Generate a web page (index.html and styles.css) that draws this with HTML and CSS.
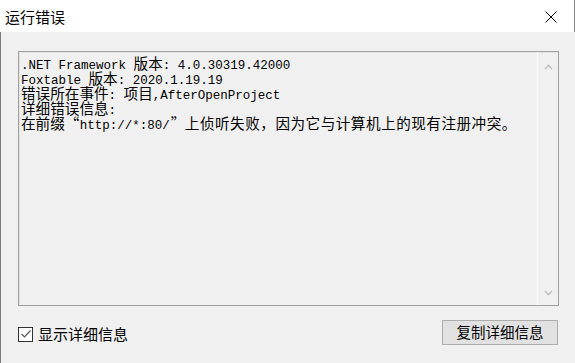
FILE: index.html
```html
<!DOCTYPE html>
<html>
<head>
<meta charset="utf-8">
<link rel="stylesheet" href="styles.css">
</head>
<body>
<div class="window">
  <div class="titlebar">
    <span class="title">运行错误</span>
    <svg class="close" width="12" height="12" viewBox="0 0 12 12"><path d="M0.5 0.5 L11.5 11.5 M11.5 0.5 L0.5 11.5" stroke="#000" stroke-width="1" fill="none"/></svg>
  </div>
  <div class="body">
    <div class="textbox">
      <div class="text">
        <div class="line">.NET Framework <span class="cjk">版本</span>: 4.0.30319.42000</div>
        <div class="line">Foxtable <span class="cjk">版本</span>: 2020.1.19.19</div>
        <div class="line"><span class="cjk">错误所在事件</span>: <span class="cjk">项目</span>,AfterOpenProject</div>
        <div class="line"><span class="cjk">详细错误信息</span>:</div>
        <div class="line"><span class="cjk">在前缀</span><span class="cjk q ql">“</span>http://*:80/<span class="cjk q qr">”</span><span class="cjk wide">上侦听失败，因为它与计算机上的现有注册冲突。</span></div>
      </div>
      <div class="scrollbar">
        <svg width="9" height="6" viewBox="0 0 9 6"><path d="M1 5 L4.5 1.5 L8 5" stroke="#c2c2c2" stroke-width="1.6" fill="none"/></svg>
        <svg width="9" height="6" viewBox="0 0 9 6"><path d="M1 1 L4.5 4.5 L8 1" stroke="#c2c2c2" stroke-width="1.6" fill="none"/></svg>
      </div>
    </div>
    <div class="footer">
      <label class="check">
        <span class="box"><svg width="12" height="12" viewBox="0 0 12 12"><path d="M1.5 6 L4.5 9 L10.5 2.5" stroke="#555" stroke-width="1.2" fill="none"/></svg></span>
        <span class="label">显示详细信息</span>
      </label>
      <button class="btn">复制详细信息</button>
    </div>
  </div>
</div>
</body>
</html>
```
FILE: styles.css
```css
html, body {
  margin: 0;
  padding: 0;
}
body {
  width: 575px;
  height: 363px;
  overflow: hidden;
  background: #f0f0f0;
  font-family: "Noto Sans CJK SC", "Noto Sans", sans-serif;
}
.window {
  display: flex;
  flex-direction: column;
  height: 363px;
}
.titlebar {
  height: 32px;
  flex: none;
  background: #fff;
  display: flex;
  align-items: center;
  justify-content: space-between;
  padding: 0 17px 0 5px;
  border-right: 1px solid #8a8a8a;
  box-sizing: border-box;
}
.title {
  font-size: 15px;
  color: #000;
  line-height: 1;
  margin-top: 1px;
}
.close {
  display: block;
  margin-top: 1px;
}
.body {
  flex: 1;
  display: flex;
  flex-direction: column;
  padding: 19px 16px 0 17px;
  border-left: 1px solid #7a7a7a;
  box-sizing: border-box;
}
.textbox {
  height: 255px;
  box-sizing: border-box;
  border: 1px solid #a0a0a0;
  box-shadow: inset 1px 1px 0 #e3e3e3;
  display: flex;
  background: #f0f0f0;
}
.text {
  flex: 1;
  padding: 3px 0 0 2px;
  font-family: "Liberation Mono", "Noto Sans CJK SC", monospace;
  font-size: 12.5px;
  color: #000;
  white-space: nowrap;
}
.line {
  height: 15px;
  line-height: 15px;
}
.cjk {
  font-family: "Noto Sans CJK SC", sans-serif;
  font-size: 14.6px;
  line-height: 15px;
}
.wide {
  letter-spacing: 0.5px;
}
.q {
  display: inline-block;
  width: 15px;
}
.ql {
  text-align: right;
  padding-right: 1px;
  box-sizing: border-box;
}
.qr {
  text-align: left;
  padding-left: 1px;
  box-sizing: border-box;
}
.scrollbar {
  width: 20px;
  border-left: 1px solid #fff;
  display: flex;
  flex-direction: column;
  justify-content: space-between;
  align-items: center;
  padding: 12px 0 9px;
}
.scrollbar svg {
  display: block;
}
.footer {
  display: flex;
  justify-content: space-between;
  align-items: center;
  margin-top: 14px;
}
.check {
  display: flex;
  align-items: center;
  gap: 5px;
  margin-top: 3px;
}
.box {
  width: 13px;
  height: 13px;
  border: 1px solid #333;
  background: #fff;
  display: flex;
  align-items: center;
  justify-content: center;
}
.box svg {
  display: block;
}
.label {
  font-size: 15px;
  line-height: 18px;
  color: #000;
}
.btn {
  width: 116px;
  height: 25px;
  margin-right: 1px;
  box-sizing: border-box;
  border: 1px solid #adadad;
  background: #e1e1e1;
  font-family: "Noto Sans CJK SC", sans-serif;
  font-size: 14.5px;
  color: #000;
  padding: 0;
  line-height: 1;
}
```
